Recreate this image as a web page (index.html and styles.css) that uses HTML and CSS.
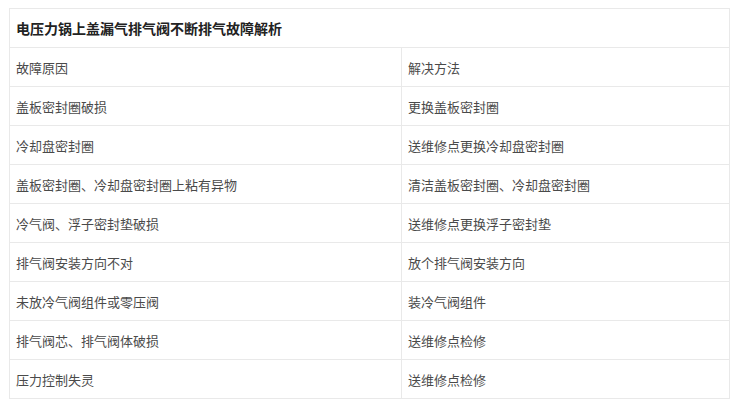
FILE: index.html
```html
<!DOCTYPE html>
<html lang="zh-CN">
<head>
<meta charset="utf-8">
<link rel="stylesheet" href="styles.css">
</head>
<body>
<table class="fault-table">
  <colgroup><col class="col-a"><col class="col-b"></colgroup>
  <tr class="title-row"><td colspan="2">电压力锅上盖漏气排气阀不断排气故障解析</td></tr>
  <tr><td>故障原因</td><td>解决方法</td></tr>
  <tr><td>盖板密封圈破损</td><td>更换盖板密封圈</td></tr>
  <tr><td>冷却盘密封圈</td><td>送维修点更换冷却盘密封圈</td></tr>
  <tr><td>盖板密封圈、冷却盘密封圈上粘有异物</td><td>清洁盖板密封圈、冷却盘密封圈</td></tr>
  <tr><td>冷气阀、浮子密封垫破损</td><td>送维修点更换浮子密封垫</td></tr>
  <tr><td>排气阀安装方向不对</td><td>放个排气阀安装方向</td></tr>
  <tr><td>未放冷气阀组件或零压阀</td><td>装冷气阀组件</td></tr>
  <tr><td>排气阀芯、排气阀体破损</td><td>送维修点检修</td></tr>
  <tr><td>压力控制失灵</td><td>送维修点检修</td></tr>
</table>
</body>
</html>
```
FILE: styles.css
```css
html, body {
  margin: 0;
  background: #fff;
}
body {
  padding: 8px 0 0 9px;
  font-family: "Noto Sans CJK SC", "Noto Sans", sans-serif;
}
.fault-table {
  border-collapse: collapse;
  width: 720px;
  table-layout: fixed;
}
.col-a {
  width: 392px;
}
.col-b {
  width: 328px;
}
.fault-table td {
  border: 1px solid #e9e9e9;
  height: 39px;
  padding: 0 0 0 6px;
  font-size: 13px;
  color: #4a4a4a;
  vertical-align: middle;
  box-sizing: border-box;
}
.title-row td {
  font-weight: bold;
  font-size: 14px;
  color: #222;
}
```
